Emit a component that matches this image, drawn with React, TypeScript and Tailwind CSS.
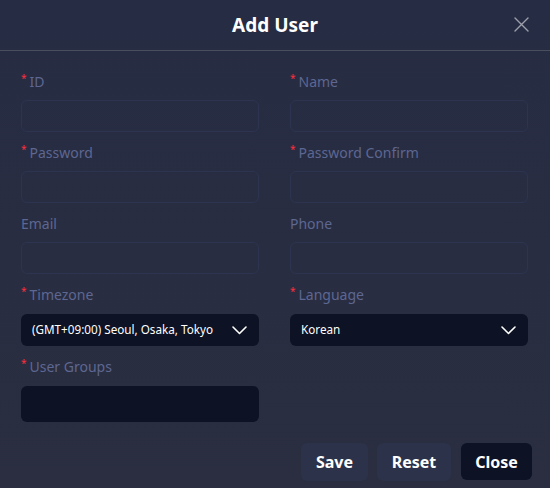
import React from "react";

const font = { fontFamily: '"Noto Sans", "Open Sans", sans-serif' };

function Label({ text, required }: { text: string; required?: boolean }) {
  return (
    <div className="flex h-5 items-center text-[14px] leading-5 text-[#5e6791]">
      {required ? (
        <span className="mr-[3px] -mt-[8px] text-[10px] leading-none text-[#ff2d3d]">*</span>
      ) : null}
      <span>{text}</span>
    </div>
  );
}

function TextField({ label, required }: { label: string; required?: boolean }) {
  return (
    <div>
      <Label text={label} required={required} />
      <input
        className="mt-2 block h-8 w-full rounded-md border border-[#2c3450] bg-transparent px-3 text-[13px] text-white outline-none"
        type="text"
      />
    </div>
  );
}

function Chevron() {
  return (
    <svg width="15" height="9" viewBox="0 0 15 9" fill="none">
      <path d="M1 1l6.5 6.5L14 1" stroke="#ffffff" strokeWidth="1.6" strokeLinecap="round" strokeLinejoin="round" />
    </svg>
  );
}

function SelectField({ label, value }: { label: string; value: string }) {
  return (
    <div>
      <Label text={label} required />
      <button className="mt-[9px] flex h-8 w-full items-center justify-between rounded-md bg-[#0d1224] pl-[11px] pr-[12px] text-[11.7px] text-white">
        <span>{value}</span>
        <Chevron />
      </button>
    </div>
  );
}

export default function App() {
  return (
    <div
      className="flex h-[488px] w-[550px] flex-col bg-gradient-to-b from-[#262c43] to-[#2a2e40]"
      style={font}
    >
      <div className="relative flex h-[51px] shrink-0 items-center justify-center border-b border-[#4b4f5d]">
        <h2 className="text-[19px] font-bold text-white">Add User</h2>
        <button className="absolute right-[21px] top-[17px]">
          <svg width="15" height="15" viewBox="0 0 15 15" fill="none">
            <path d="M1 1l13 13M14 1L1 14" stroke="#9c9fab" strokeWidth="1.4" strokeLinecap="round" />
          </svg>
        </button>
      </div>

      <div className="grid grid-cols-2 gap-x-[31px] gap-y-[11px] pl-[21px] pr-[22px] pt-[21px]">
        <TextField label="ID" required />
        <TextField label="Name" required />
        <TextField label="Password" required />
        <TextField label="Password Confirm" required />
        <TextField label="Email" />
        <TextField label="Phone" />
        <SelectField label="Timezone" value="(GMT+09:00) Seoul, Osaka, Tokyo" />
        <SelectField label="Language" value="Korean" />
        <div>
          <Label text="User Groups" required />
          <div className="mt-[9px] h-9 w-full rounded-md bg-[#0d1224]" />
        </div>
      </div>

      <div className="mt-[21px] flex justify-end gap-[9px] pr-[18px]">
        <button className="h-[38px] w-[67px] rounded-md bg-[#2c3249] text-[16px] font-bold text-white">Save</button>
        <button className="h-[38px] w-[74px] rounded-md bg-[#2c3249] text-[16px] font-bold text-white">Reset</button>
        <button className="ml-[1px] h-[37px] w-[71px] rounded-md bg-[#0d1224] text-[16px] font-bold text-white">Close</button>
      </div>
    </div>
  );
}
